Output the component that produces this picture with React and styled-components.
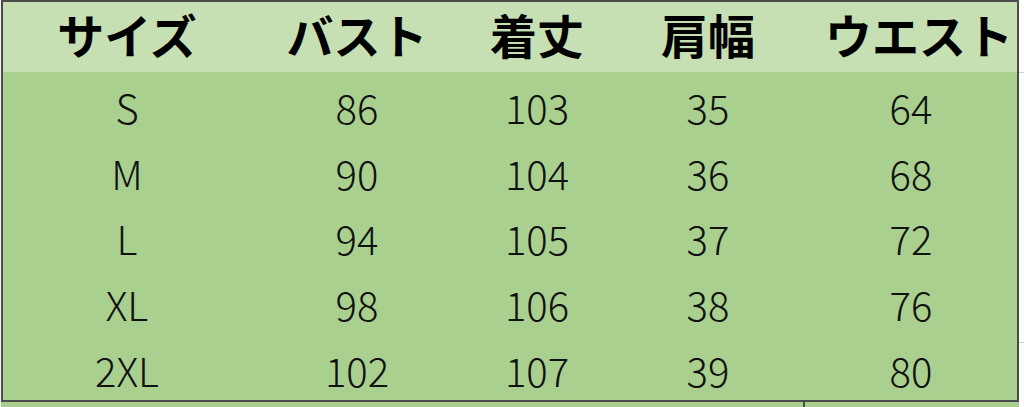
import React from "react";
import styled, { createGlobalStyle } from "styled-components";

const Global = createGlobalStyle`
  html, body { margin: 0; padding: 0; background: #ffffff; }
  body { font-family: "Noto Sans CJK JP", "Noto Sans", sans-serif; color: #000; }
`;

const COLS = "248px 212px 148px 194px 212px";

const Sheet = styled.div`
  display: flex;
  width: 1024px;
  height: 407px;
  overflow: hidden;
  background: #ffffff;
`;

const LeftGutter = styled.div`
  width: 1px;
  flex: none;
  background: #f4f4f4;
`;

const Main = styled.div`
  display: flex;
  flex-direction: column;
  flex: none;
`;

const Frame = styled.div`
  display: grid;
  grid-template-columns: ${COLS};
  grid-template-rows: 70px repeat(5, 65.6px);
  border: 2px solid #4b4b4b;
  background: #a9d08e;
`;

const HeadCell = styled.div`
  display: flex;
  align-items: center;
  justify-content: center;
  background: #c6e0b4;
  font-weight: 700;
  font-size: 47px;
  line-height: 1;
  white-space: nowrap;
  padding-bottom: 8px;
  padding-left: ${(p) => p.$shift || "0px"};
`;

const BodyCell = styled.div`
  display: flex;
  align-items: center;
  justify-content: center;
  font-weight: 300;
  font-size: 40px;
  line-height: 1;
  padding-top: 5px;
  white-space: nowrap;
  color: #111;
`;

const Strip = styled.div`
  display: grid;
  grid-template-columns: 804px 214px;
  height: 5px;
  background: #a9d08e;
`;

const StripCell = styled.div`
  border-right: ${(p) => (p.$line ? "2px solid #4b4b4b" : "none")};
`;

const Margin = styled.div`
  flex: 1;
  display: flex;
  flex-direction: column;
`;

const MarginCell = styled.div`
  height: ${(p) => p.$h}px;
  flex: none;
  border-bottom: 1px solid #d0d0d0;
`;

const headers = [
  { t: "サイズ" },
  { t: "バスト" },
  { t: "着丈" },
  { t: "肩幅" },
  { t: "ウエスト", shift: "16px" },
];
const rows = [
  ["S", "86", "103", "35", "64"],
  ["M", "90", "104", "36", "68"],
  ["L", "94", "105", "37", "72"],
  ["XL", "98", "106", "38", "76"],
  ["2XL", "102", "107", "39", "80"],
];

export default function App() {
  return (
    <>
      <Global />
      <Sheet>
        <LeftGutter />
        <Main>
          <Frame>
            {headers.map((h) => (
              <HeadCell key={h.t} $shift={h.shift}>
                {h.t}
              </HeadCell>
            ))}
            {rows.map((r) =>
              r.map((v, i) => <BodyCell key={r[0] + i}>{v}</BodyCell>)
            )}
          </Frame>
          <Strip>
            <StripCell $line />
            <StripCell />
          </Strip>
        </Main>
        <Margin>
          <MarginCell $h={72} />
          <MarginCell $h={269} />
        </Margin>
      </Sheet>
    </>
  );
}
